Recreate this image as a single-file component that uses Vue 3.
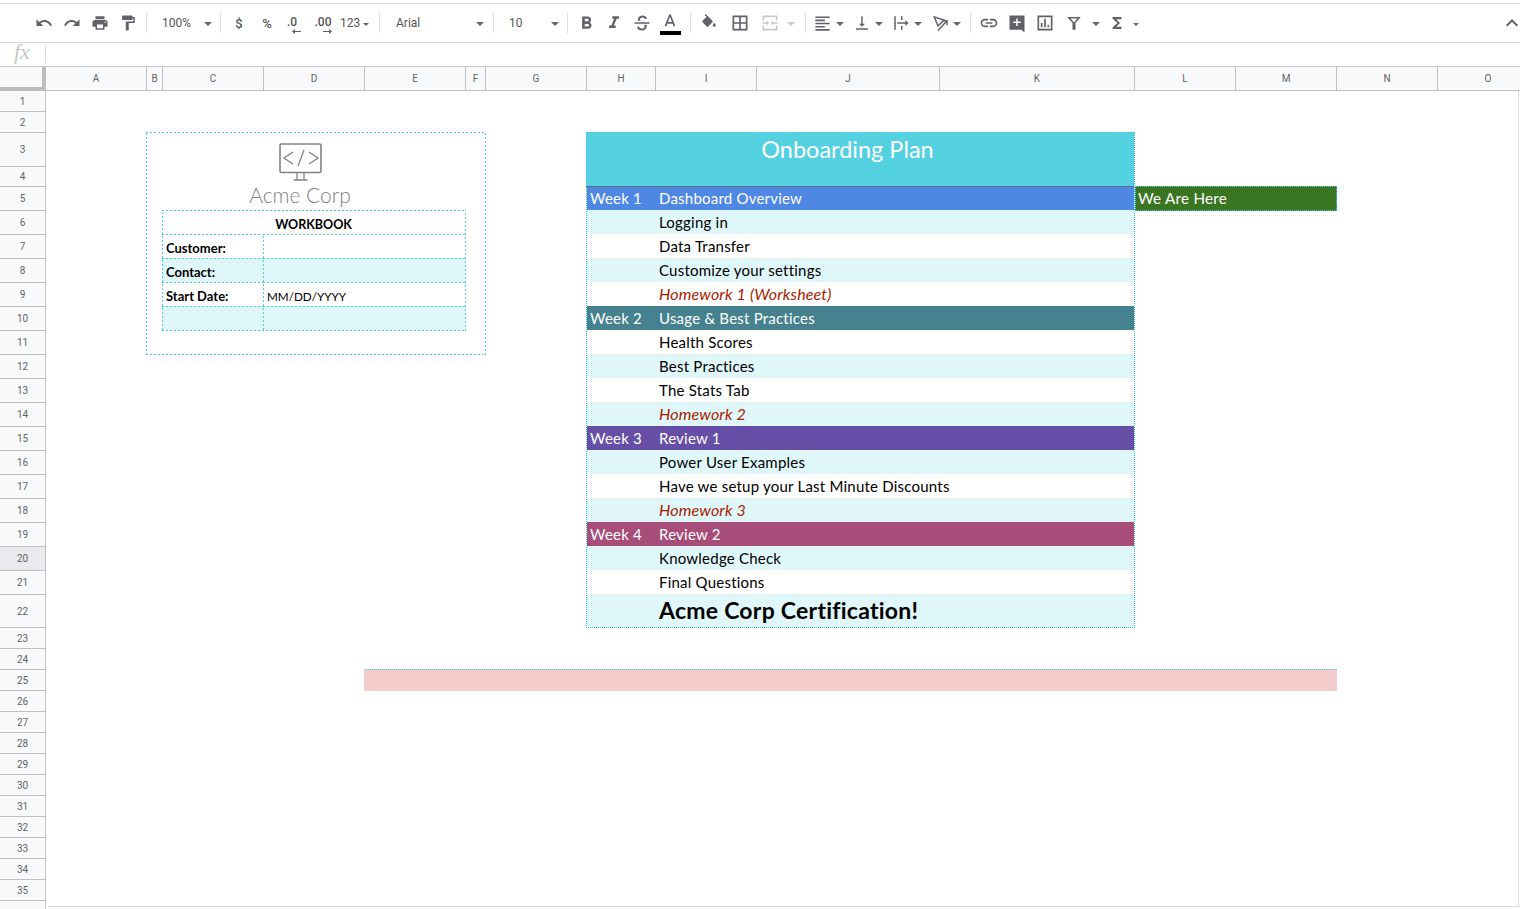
<template>
  <div class="page">
    <div class="toolbar">
      <template v-for="(t, i) in tools" :key="i">
        <span v-if="t.sep" class="sep" :style="{ marginLeft: t.ml + 'px', marginRight: t.mr + 'px' }"></span>
        <div
          v-else
          class="tool"
          :class="[t.cls, { dim: t.dim }]"
          :style="{ width: t.w + 'px', paddingLeft: (t.pl || 0) + 'px', marginLeft: (t.ml || 0) + 'px' }"
        >
          <span v-if="t.text" class="tool-text" :style="{ width: t.tw ? t.tw + 'px' : 'auto' }">{{ t.text }}</span>
          <span v-if="t.dec" class="dec" :class="t.arrow">
            <span>{{ t.dec }}</span>
            <svg width="9" height="5" viewBox="0 0 9 5">
              <path d="M0 2h6V0l3 2.5L6 5V3H0z" />
            </svg>
          </span>
          <span v-if="t.d" class="ico-box" :style="{ width: (t.iw || 28) + 'px' }">
            <svg :width="t.size || 18" :height="t.size || 18" viewBox="0 0 24 24">
              <path v-if="t.line" :d="t.d" fill="none" stroke="currentColor" stroke-width="2" />
              <path v-else :d="t.d" fill-rule="evenodd" />
            </svg>
            <i v-if="t.bar" class="color-bar"></i>
          </span>
          <i
            v-if="t.caret"
            class="caret"
            :class="{ small: t.caret === 'small' }"
            :style="{ marginLeft: (t.cm || 0) + 'px' }"
          ></i>
        </div>
      </template>
    </div>

    <div class="formula">
      <span class="fx">fx</span>
      <span class="fx-sep"></span>
    </div>

    <div class="col-head">
      <div class="corner"></div>
      <div v-for="c in columns" :key="c.name" class="col-cell" :style="{ width: c.w + 'px' }">
        {{ c.name }}
      </div>
    </div>

    <div class="sheet">
      <div class="row-head">
        <div
          v-for="r in rowHeads"
          :key="r.n"
          class="row-cell"
          :class="{ active: r.n === 20 }"
          :style="{ height: r.h + 'px' }"
        >
          {{ r.n }}
        </div>
      </div>

      <div class="cells">
        <div class="workbook">
          <div class="logo">
            <svg width="44" height="38" viewBox="0 0 44 38" fill="none" stroke="#808285">
              <rect x="1" y="1" width="41" height="28.5" rx="1.5" stroke-width="1.6" />
              <path d="M14 9l-9 6 9 6M30 9l9 6-9 6M25 7l-6 16" stroke-width="1.3" />
              <path d="M18 30v7M25 30v7M14.500 37h14" stroke-width="1.300" />
            </svg>
            <span class="logo-name">Acme Corp</span>
          </div>
          <div class="info">
            <div class="info-title">WORKBOOK</div>
            <template v-for="row in infoRows" :key="row.key">
              <div class="info-label" :class="{ alt: row.alt }">{{ row.label }}</div>
              <div class="info-value" :class="{ alt: row.alt }">{{ row.value }}</div>
            </template>
          </div>
        </div>

        <div class="plan">
          <div class="plan-title"><span>Onboarding Plan</span></div>
          <div
            v-for="(row, i) in planRows"
            :key="i"
            class="plan-row"
            :class="[row.cls]"
          >
            <span class="plan-week">{{ row.week }}</span>
            <span class="plan-text">{{ row.text }}</span>
          </div>
        </div>

        <div class="here">We Are Here</div>
        <div class="pink"></div>
      </div>
    </div>
    <div class="sheet-end"></div>
  </div>
</template>

<script setup>
const I = {
  undo: "M12.5 8c-2.65 0-5.05.99-6.9 2.6L2 7v9h9l-3.62-3.62c1.39-1.16 3.16-1.88 5.12-1.88 3.54 0 6.55 2.31 7.6 5.5l2.37-.78C21.08 11.03 17.15 8 12.5 8z",
  redo: "M18.4 10.6C16.55 8.99 14.15 8 11.5 8c-4.65 0-8.58 3.03-9.96 7.22L3.9 16c1.05-3.19 4.05-5.5 7.6-5.5 1.95 0 3.73.72 5.12 1.88L13 16h9V7l-3.6 3.6z",
  print: "M19 8H5c-1.66 0-3 1.34-3 3v6h4v4h12v-4h4v-6c0-1.66-1.34-3-3-3zm-3 11H8v-5h8v5zm3-7c-.55 0-1-.45-1-1s.45-1 1-1 1 .45 1 1-.45 1-1 1zm-1-9H6v4h12V3z",
  paint: "M18 4V3c0-.55-.45-1-1-1H5c-.55 0-1 .45-1 1v4c0 .55.45 1 1 1h12c.55 0 1-.45 1-1V6h1v4H9v11c0 .55.45 1 1 1h2c.55 0 1-.45 1-1v-9h8V4h-3z",
  bold: "M15.6 10.79c.97-.67 1.65-1.77 1.65-2.79 0-2.26-1.75-4-4-4H7v14h7.04c2.09 0 3.71-1.7 3.71-3.79 0-1.52-.86-2.82-2.15-3.42zM10 6.5h3c.83 0 1.5.67 1.5 1.5s-.67 1.5-1.5 1.5h-3v-3zm3.500 9H10v-3h3.500c.83 0 1.5.67 1.5 1.5s-.67 1.5-1.5 1.5z",
  italic: "M10 4v3h2.210l-3.420 8H6v3h8v-3h-2.210l3.420-8H18V4z",
  strike: "M7 8c0-3 2.500-5 5.500-5 2.700 0 4.700 1.300 5.500 3.500l-2.400.9C15.100 6.100 14 5.300 12.400 5.300 10.800 5.300 9.700 6.200 9.700 7.500c0 .8.300 1.400 1 1.900H7.500C7.200 9 7 8.500 7 8zM3 11h18v2H3zM14.500 14h2.900c.2.400.300.9.300 1.500 0 3-2.500 5.500-5.700 5.500-3 0-5.200-1.500-6-4l2.400-.8c.5 1.600 1.900 2.500 3.600 2.500 1.800 0 3.100-1.100 3.100-2.500 0-.9-.2-1.600-.6-2.200z",
  textColor: "M11 3L5.500 17h2.250l1.120-3h6.250l1.120 3h2.250L13 3h-2zm-1.380 9L12 5.670 14.380 12H9.620z",
  fill: "M16.560 8.940L7.620 0 6.210 1.410l2.380 2.380-5.150 5.150c-.59.590-.59 1.540 0 2.120l5.500 5.500c.29.290.68.440 1.060.440s.77-.150 1.060-.440l5.500-5.500c.59-.580.59-1.530 0-2.120zM19 11.500s-2 2.170-2 3.500c0 1.100.9 2 2 2s2-.9 2-2c0-1.330-2-3.500-2-3.500z",
  borders: "M3 3h18v18H3zM5 5v6h6V5zM13 5v6h6V5zM5 13v6h6v-6zM13 13v6h6v-6z",
  merge: "M3 3h18v6h-2V5H5v4H3zM3 15h2v4h14v-4h2v6H3zM3 11h5V9l3 3-3 3v-2H3zM21 11h-5V9l-3 3 3 3v-2h5z",
  align: "M15 15H3v2h12v-2zm0-8H3v2h12V7zM3 13h18v-2H3v2zm0 8h18v-2H3v2zM3 3v2h18V3H3z",
  valign: "M16 13h-3V3h-2v10H8l4 4 4-4zM4 19v2h16v-2H4z",
  wrap: "M3 3h2v18H3zM12 3h2v5h-2zM12 16h2v5h-2zM7 11h11V8l4 4-4 4v-3H7z",
  rotate: "M3 4l13 4-8 8zM8 22L20 9M14 9h6v6",
  link: "M3.900 12c0-1.710 1.390-3.100 3.100-3.100h4V7H7c-2.760 0-5 2.240-5 5s2.240 5 5 5h4v-1.900H7c-1.710 0-3.100-1.390-3.100-3.100zM8 13h8v-2H8v2zm9-6h-4v1.900h4c1.710 0 3.100 1.390 3.100 3.100s-1.390 3.100-3.100 3.100h-4V17h4c2.760 0 5-2.240 5-5s-2.240-5-5-5z",
  comment: "M2 2h20v23l-4-4H2zM13 6h-2v4H7v2h4v4h2v-4h4v-2h-4z",
  chart: "M3 3h18v18H3zM5 5v14h14V5zM7 12h2v5H7zM11 7h2v10h-2zM15 14h2v3h-2z",
  filter: "M3 4h18l-7 8v9h-4v-9zM7.400 6l4.600 5.300L16.600 6z",
  sigma: "M18 4H6v2l6.500 6L6 18v2h12v-3h-7l5-5-5-5h7z",
  chevron: "M7.410 15.410L12 10.830l4.590 4.580L18 14l-6-6-6 6z",
};

const sep = (ml = 4, mr = 4) => ({ sep: true, ml, mr });

const tools = [
  { w: 28, d: I.undo },
  { w: 28, d: I.redo },
  { w: 28, d: I.print },
  { w: 28, d: I.paint },
  sep(),
  { w: 65, pl: 11, text: "100%", tw: 42, caret: true },
  sep(),
  { w: 28, text: "$", cls: "center" },
  { w: 28, text: "%", cls: "center" },
  { w: 28, dec: ".0", arrow: "flip", cls: "center" },
  { w: 28, dec: ".00", cls: "center" },
  { w: 38, pl: 3, text: "123", tw: 23, caret: "small" },
  sep(),
  { w: 105, pl: 12, text: "Arial", tw: 80, caret: true },
  sep(),
  { w: 65, pl: 11, text: "10", tw: 42, caret: true },
  sep(),
  { w: 28, d: I.bold, size: 21 },
  { w: 28, d: I.italic, size: 20 },
  { w: 28, d: I.strike, size: 20 },
  { w: 28, d: I.textColor, size: 20, bar: true, cls: "color-tool" },
  sep(6, 4),
  { w: 28, d: I.fill },
  { w: 28, ml: 3, d: I.borders, size: 20 },
  { w: 42, ml: 2, d: I.merge, iw: 28, size: 20, caret: true, cm: 3, dim: true },
  sep(7, 4),
  { w: 36, d: I.align, iw: 24, size: 19, caret: true, cm: 2 },
  { w: 34, ml: 4, d: I.valign, iw: 24, caret: true, cm: 1 },
  { w: 34, ml: 5, d: I.wrap, iw: 24, caret: true, cm: 1 },
  { w: 34, ml: 6, d: I.rotate, iw: 24, line: true, caret: true },
  sep(7, 4),
  { w: 28, d: I.link, size: 20 },
  { w: 28, d: I.comment, size: 18 },
  { w: 28, d: I.chart, size: 20 },
  { w: 44, ml: 1, d: I.filter, iw: 28, caret: true, cm: 4 },
  { w: 38, ml: 1, d: I.sigma, iw: 24, caret: "small", cm: 4 },
  { w: 16, d: I.chevron, iw: 16, size: 24, cls: "chevron" },
];

const columns = [
  { name: "A", w: 101 }, { name: "B", w: 16 }, { name: "C", w: 101 }, { name: "D", w: 101 },
  { name: "E", w: 101 }, { name: "F", w: 20 }, { name: "G", w: 101 }, { name: "H", w: 69 },
  { name: "I", w: 101 }, { name: "J", w: 183 }, { name: "K", w: 195 }, { name: "L", w: 101 },
  { name: "M", w: 101 }, { name: "N", w: 101 }, { name: "O", w: 101 },
];

const rowHeights = { 1: 21, 2: 21, 3: 34, 4: 20, 22: 33 };
const rowHeads = Array.from({ length: 36 }, (_, i) => {
  const n = i + 1;
  let h = rowHeights[n];
  if (!h) h = n >= 5 && n <= 21 ? 24 : 21;
  return { n: n === 36 ? "" : n, h };
});

const infoRows = [
  { key: 1, label: "Customer:", value: "" },
  { key: 2, label: "Contact:", value: "", alt: true },
  { key: 3, label: "Start Date:", value: "MM/DD/YYYY" },
  { key: 4, label: "", value: "", alt: true },
];

const planRows = [
  { week: "Week 1", text: "Dashboard Overview", cls: "week1" },
  { text: "Logging in", cls: "alt" },
  { text: "Data Transfer" },
  { text: "Customize your settings", cls: "alt" },
  { text: "Homework 1 (Worksheet)", cls: "hw" },
  { week: "Week 2", text: "Usage & Best Practices", cls: "week2" },
  { text: "Health Scores" },
  { text: "Best Practices", cls: "alt" },
  { text: "The Stats Tab" },
  { text: "Homework 2", cls: "hw alt" },
  { week: "Week 3", text: "Review 1", cls: "week3" },
  { text: "Power User Examples", cls: "alt" },
  { text: "Have we setup your Last Minute Discounts" },
  { text: "Homework 3", cls: "hw alt" },
  { week: "Week 4", text: "Review 2", cls: "week4" },
  { text: "Knowledge Check", cls: "alt" },
  { text: "Final Questions" },
  { text: "Acme Corp Certification!", cls: "cert alt" },
];
</script>

<style>
html,
body {
  margin: 0;
  overflow: hidden;
  background: #fff;
}
</style>

<style scoped>
.page {
  position: relative;
  width: 1520px;
  height: 909px;
  overflow: hidden;
  padding-top: 3px;
  box-sizing: border-box;
  font-family: Roboto, Arial, sans-serif;
  background: #fff;
}
.toolbar {
  display: flex;
  align-items: center;
  height: 40px;
  box-sizing: border-box;
  padding-left: 30px;
  border-top: 1px solid #dcdcdc;
  border-bottom: 1px solid #dcdcdc;
  color: #5f6368;
}
.tool {
  display: flex;
  align-items: center;
  flex: none;
  box-sizing: border-box;
  height: 28px;
  fill: currentColor;
}
.tool.center {
  justify-content: center;
}
.tool.dim {
  color: #c8c9ca;
}
.tool.chevron {
  position: absolute;
  right: 0;
  top: 9px;
  width: 16px;
}
.tool-text {
  flex: none;
  font-size: 12px;
  color: #555;
}
.tool.center .tool-text {
  font-size: 13px;
  font-weight: 500;
}
.ico-box {
  position: relative;
  display: flex;
  align-items: center;
  justify-content: center;
  flex: none;
}
.ico-box svg {
  display: block;
  flex: none;
}
.color-tool .ico-box {
  flex-direction: column;
  box-sizing: border-box;
  width: 28px;
  height: 28px;
  padding-top: 3px;
  justify-content: flex-start;
}
.color-bar {
  display: block;
  flex: none;
  width: 21px;
  height: 4px;
  background: #000;
  margin-top: -1px;
}
.caret {
  display: block;
  flex: none;
  width: 0;
  height: 0;
  border-left: 4px solid transparent;
  border-right: 4px solid transparent;
  border-top: 4px solid #666;
  margin-top: 2px;
}
.tool.dim .caret {
  border-top-color: #c8c9ca;
}
.caret.small {
  border-left-width: 3px;
  border-right-width: 3px;
  border-top-width: 3px;
}
.dec {
  display: flex;
  flex-direction: column;
  align-items: flex-end;
  font-size: 12px;
  line-height: 12px;
  font-weight: 500;
  color: #555;
  margin-top: 3px;
}
.dec svg {
  display: block;
  margin-top: 1px;
  margin-right: -1px;
  fill: #5f6368;
}
.dec.flip {
  margin-left: -6px;
}
.dec.flip svg {
  transform: scaleX(-1);
  margin-right: -4px;
}
.sep {
  flex: none;
  width: 1px;
  height: 20px;
  background: #dadce0;
}
.formula {
  display: flex;
  align-items: center;
  height: 24px;
  box-sizing: border-box;
  border-bottom: 1px solid #c7c7c7;
}
.fx {
  width: 45px;
  box-sizing: border-box;
  padding-left: 14px;
  margin-top: -5px;
  font-family: "Liberation Serif", serif;
  font-style: italic;
  font-size: 22px;
  color: #c8c8c8;
  line-height: 20px;
}
.fx-sep {
  width: 1px;
  height: 17px;
  background: #dadada;
}
.col-head {
  display: flex;
  height: 24px;
  box-sizing: border-box;
  background: #f8f9fa;
  border-bottom: 1px solid #c0c0c0;
}
.corner {
  flex: none;
  width: 46px;
  box-sizing: border-box;
  background: #f8f9fa;
  border-right: 4px solid #bdbdbd;
  border-bottom: 4px solid #bdbdbd;
  margin-bottom: -1px;
}
.col-cell {
  flex: none;
  box-sizing: border-box;
  display: flex;
  align-items: center;
  justify-content: center;
  font-size: 10px;
  color: #5f6368;
  border-right: 1px solid #c0c0c0;
}
.sheet {
  display: flex;
  height: 818px;
}
.row-head {
  flex: none;
  width: 46px;
  box-sizing: border-box;
  background: #f8f9fa;
  border-right: 1px solid #c0c0c0;
}
.row-cell {
  box-sizing: border-box;
  display: flex;
  align-items: center;
  justify-content: center;
  font-size: 10px;
  color: #5f6368;
  border-bottom: 1px solid #c0c0c0;
}
.row-cell:last-child {
  border-bottom: 0;
}
.row-cell.active {
  background: #e8eaed;
}
/* the grid lines of the cells sit one pixel left of the header lines */
.cells {
  --dash-h: repeating-linear-gradient(90deg, #4dd0e1 0 2px, transparent 2px 4px);
  --dash-v: repeating-linear-gradient(0deg, #4dd0e1 0 2px, transparent 2px 4px);
  flex: 1;
  display: grid;
  grid-template-columns: 100px 16px 101px 101px 101px 20px 101px 69px 101px 183px 195px 101px 101px 101px 1fr;
  grid-template-rows: 21px 20px 34px 20px repeat(17, 24px) 34px repeat(13, 21px);
  align-content: start;
  font-family: Lato, Arial, sans-serif;
  color: #000;
}
.workbook {
  grid-column: 2 / 7;
  grid-row: 3 / 12;
  margin-right: -1px;
  margin-bottom: -1px;
  box-sizing: border-box;
  padding: 1px 0 0 16px;
  background:
    var(--dash-h) top / 100% 1px no-repeat,
    var(--dash-h) bottom / 100% 1px no-repeat,
    var(--dash-v) left / 1px 100% no-repeat,
    var(--dash-v) right / 1px 100% no-repeat;
}
.logo {
  display: flex;
  flex-direction: column;
  align-items: center;
  box-sizing: border-box;
  width: 276px;
  height: 77px;
  padding-top: 10px;
}
.logo svg {
  display: block;
  flex: none;
  margin-left: 2px;
}
.logo-name {
  font-size: 21px;
  font-weight: 300;
  line-height: 24px;
  margin-top: 2px;
  color: #808285;
  white-space: nowrap;
}
.info {
  display: grid;
  grid-template-columns: 101px 202px;
  grid-auto-rows: 24px;
  width: 304px;
  height: 121px;
  box-sizing: border-box;
  padding: 0 1px 1px 0;
  font-size: 13px;
  background:
    var(--dash-h) bottom / 100% 1px no-repeat,
    var(--dash-v) right / 1px 100% no-repeat;
}
.info > div {
  display: flex;
  align-items: center;
  box-sizing: border-box;
  padding: 4px 0 0 4px;
  white-space: nowrap;
  background:
    var(--dash-h) top / 100% 1px no-repeat,
    var(--dash-v) left / 1px 100% no-repeat;
}
.info .info-title {
  grid-column: 1 / 3;
  justify-content: center;
  padding-left: 0;
  font-size: 12.5px;
  font-weight: 700;
}
.info-label {
  font-weight: 700;
}
.info-value {
  font-size: 11.7px;
}
.info > .alt {
  background-color: #e0f7fa;
}
.plan {
  grid-column: 8 / 12;
  grid-row: 3 / 23;
  margin-right: -1px;
  box-sizing: border-box;
  border-left: 1px dotted #26c6da;
  border-right: 1px dotted #26c6da;
  border-bottom: 1px dotted #26c6da;
  display: flex;
  flex-direction: column;
  letter-spacing: 0.22px;
}
.plan-title {
  flex: none;
  height: 55px;
  box-sizing: border-box;
  background: #54d1e0;
  border-bottom: 1px solid #5b6b78;
  margin-left: -1px;
  padding-right: 25px;
  text-align: center;
  color: #fff;
  font-size: 23.5px;
  letter-spacing: 0;
  line-height: 34px;
}
.plan-row {
  display: flex;
  align-items: center;
  flex: none;
  box-sizing: border-box;
  height: 24px;
  font-size: 15px;
  white-space: nowrap;
}
.plan-week {
  flex: none;
  width: 68px;
  box-sizing: border-box;
  padding-left: 3px;
}
.plan-text {
  padding-left: 4px;
}
.plan-row.alt {
  background: #e0f7fa;
}
.plan-row.hw {
  color: #a61c00;
  font-style: italic;
  font-size: 16px;
  letter-spacing: 0.15px;
  padding-bottom: 2px;
}
.plan-row.cert {
  flex: 1;
  font-size: 23px;
  font-weight: 700;
  letter-spacing: 0.25px;
  padding-bottom: 2px;
}
.plan-row.week1,
.plan-row.week2,
.plan-row.week3,
.plan-row.week4 {
  color: #fff;
}
.plan-row.week1 {
  height: 23px;
  padding-bottom: 1px;
  background: #4f87e4;
}
.plan-row.week2 {
  background: #45818e;
}
.plan-row.week3 {
  background: #674ea7;
}
.plan-row.week4 {
  background: #a64d79;
}
.here {
  grid-column: 12 / 14;
  grid-row: 5;
  margin-left: 1px;
  margin-right: -1px;
  margin-bottom: -1px;
  box-sizing: border-box;
  display: flex;
  align-items: center;
  padding: 0 0 1px 2px;
  background: #3a7522;
  border: 1px dotted #4dd0e1;
  color: #fff;
  font-size: 15.2px;
  letter-spacing: 0.25px;
}
.pink {
  grid-column: 5 / 14;
  grid-row: 25;
  margin-top: -1px;
  margin-right: -1px;
  background: #f4cccc;
  border-top: 1px dotted #4dd0e1;
}
.sheet-end {
  position: absolute;
  left: 48px;
  right: 0;
  top: 906px;
  height: 1px;
  background: #dcdcdc;
}
.cells::after {
  content: "";
  position: absolute;
  right: 1px;
  top: 91px;
  height: 816px;
  width: 1px;
  background: #dcdcdc;
}
</style>
